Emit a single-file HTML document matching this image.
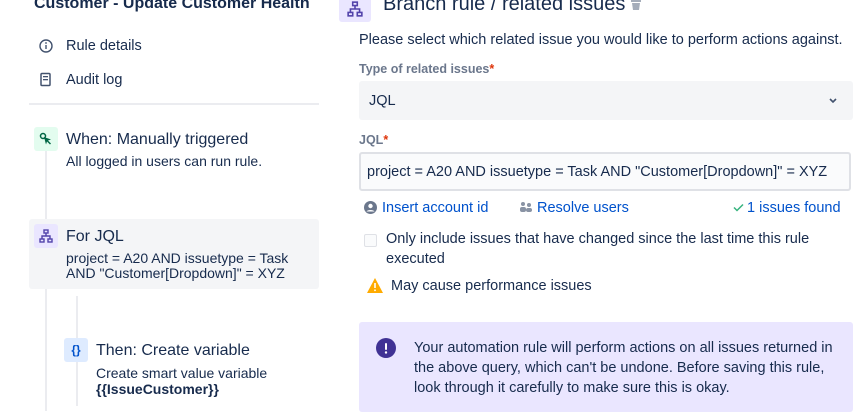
<!DOCTYPE html>
<html><head><style>
*{margin:0;padding:0;box-sizing:border-box}
body{width:861px;height:402px;overflow:hidden;background:#fff;font-family:"Liberation Sans",sans-serif;color:#172B4D;position:relative}
.a{position:absolute;white-space:nowrap}
.s13{font-size:14px}.s14{font-size:14.5px}.s16{font-size:16px}
.ib{position:absolute;width:24px;height:24px;border-radius:3px;display:flex;align-items:center;justify-content:center}
.blue{color:#0052CC}
</style></head><body>
<div class="a" style="left:34px;top:-5px;font-size:16px;font-weight:bold">Customer - Update Customer Health</div>
<svg class="a" style="left:38px;top:38px" width="16" height="16" viewBox="0 0 16 16"><circle cx="8" cy="8" r="6" fill="none" stroke="#42526E" stroke-width="1.4"/><rect x="7.3" y="7" width="1.4" height="4" fill="#42526E"/><circle cx="8" cy="5" r=".9" fill="#42526E"/></svg>
<div class="a s14" style="left:66px;top:38px">Rule details</div>
<svg class="a" style="left:39px;top:72px" width="14" height="16" viewBox="0 0 14 16"><rect x="2" y="1.5" width="9" height="12" rx="1" fill="none" stroke="#42526E" stroke-width="1.5"/><rect x="4" y="4" width="5" height="1.3" fill="#42526E"/><rect x="4" y="7" width="5" height="1.3" fill="#42526E"/></svg>
<div class="a s14" style="left:66px;top:72px">Audit log</div>
<div class="a" style="left:29px;top:103px;width:290px;height:2px;background:#ebecf0"></div>
<div class="a" style="left:45px;top:151px;width:2px;height:260px;background:#ebecf0"></div>
<div class="ib" style="left:34px;top:127px;background:#e3fcef"><svg width="16" height="16" viewBox="0 0 16 16"><circle cx="5" cy="5" r="2.5" fill="none" stroke="#006644" stroke-width="1.5"/><path d="M6 6l7 2.5-3 1 3 3-1 1-3-3-1 3z" fill="#006644"/></svg></div>
<div class="a s16" style="left:66px;top:131px">When: Manually triggered</div>
<div class="a s13" style="left:66px;top:153px">All logged in users can run rule.</div>
<div class="a" style="left:29px;top:219px;width:290px;height:70px;background:#f4f5f7;border-radius:3px"></div>
<div class="ib" style="left:34px;top:224px;background:#eae6ff"><svg width="14" height="14" viewBox="0 0 14 14" fill="none" stroke="#5243AA" stroke-width="1.4"><rect x="5" y="1" width="4" height="3"/><rect x="1" y="10" width="4" height="3"/><rect x="9" y="10" width="4" height="3"/><path d="M7 4v3M3 10V7h8v3"/></svg></div>
<div class="a s16" style="left:66px;top:228px">For JQL</div>
<div class="a s13" style="left:66px;top:250px">project = A20 AND issuetype = Task</div>
<div class="a s13" style="left:66px;top:265px">AND "Customer[Dropdown]" = XYZ</div>
<div class="a" style="left:76px;top:296px;width:2px;height:110px;background:#ebecf0"></div>
<div class="ib" style="left:64px;top:338px;background:#deebff;color:#0052CC;font-weight:bold;font-size:12px">{}</div>
<div class="a s16" style="left:96px;top:342px">Then: Create variable</div>
<div class="a s13" style="left:96px;top:365px">Create smart value variable</div>
<div class="a s13" style="left:96px;top:381px;font-weight:bold">{{IssueCustomer}}</div>

<div class="a" style="left:339px;top:-10px;width:32px;height:32px;border-radius:3px;background:#eae6ff;display:flex;align-items:center;justify-content:center;padding-top:6px"><svg width="16" height="16" viewBox="0 0 14 14" fill="none" stroke="#5243AA" stroke-width="1.4"><rect x="5" y="1" width="4" height="3"/><rect x="1" y="10" width="4" height="3"/><rect x="9" y="10" width="4" height="3"/><path d="M7 4v3M3 10V7h8v3"/></svg></div>
<div class="a" style="left:383px;top:-7px;font-size:20px">Branch rule / related issues</div>
<svg class="a" style="left:630px;top:0px" width="12" height="12" viewBox="0 0 12 12"><rect x="1" y="0" width="10" height="2" fill="#a5adba"/><path d="M2 3h8l-1 7H3z" fill="#a5adba"/></svg>
<div class="a s14" style="left:359px;top:32px">Please select which related issue you would like to perform actions against.</div>
<div class="a" style="left:359px;top:62px;font-size:12.5px;font-weight:bold;color:#6B778C">Type of related issues<span style="color:#DE350B">*</span></div>
<div class="a" style="left:359px;top:81px;width:494px;height:39px;background:#f4f5f7;border-radius:3px"></div>
<div class="a s14" style="left:369px;top:93px">JQL</div>
<svg class="a" style="left:828px;top:97px" width="10" height="8" viewBox="0 0 10 8"><path d="M2 2l3 3 3-3" fill="none" stroke="#42526E" stroke-width="1.6"/></svg>
<div class="a" style="left:359px;top:133px;font-size:12.5px;font-weight:bold;color:#6B778C">JQL<span style="color:#DE350B">*</span></div>
<div class="a" style="left:359px;top:152px;width:492px;height:39px;background:#fafbfc;border:2px solid #dfe1e6;border-radius:3px"></div>
<div class="a s14" style="left:367px;top:164px">project = A20 AND issuetype = Task AND "Customer[Dropdown]" = XYZ</div>
<svg class="a" style="left:364px;top:201px" width="13" height="13" viewBox="0 0 13 13"><circle cx="6.5" cy="6.5" r="6.5" fill="#6B778C"/><circle cx="6.5" cy="5" r="2.2" fill="#fff"/><path d="M2.5 10.5c1-2 7-2 8 0" fill="#fff"/></svg>
<div class="a s14 blue" style="left:382px;top:200px">Insert account id</div>
<svg class="a" style="left:519px;top:201px" width="14" height="12" viewBox="0 0 14 12"><circle cx="4" cy="3" r="2" fill="#8993a4"/><circle cx="10" cy="4" r="2" fill="#8993a4"/><rect x="1" y="6" width="6" height="5" rx="2" fill="#8993a4"/><rect x="7" y="7" width="6" height="4" rx="2" fill="#8993a4"/></svg>
<div class="a s14 blue" style="left:537px;top:200px">Resolve users</div>
<svg class="a" style="left:733px;top:203px" width="11" height="9" viewBox="0 0 11 9"><path d="M1 4.5l3 3 6-6" fill="none" stroke="#36B37E" stroke-width="1.5"/></svg>
<div class="a s14 blue" style="left:747px;top:200px">1 issues found</div>
<div class="a" style="left:364px;top:234px;width:13px;height:13px;border:1.5px solid #dfe1e6;border-radius:2px;background:#fafbfc"></div>
<div class="a s14" style="left:386px;top:231px">Only include issues that have changed since the last time this rule</div>
<div class="a s14" style="left:386px;top:251px">executed</div>
<svg class="a" style="left:366px;top:277px" width="18" height="17" viewBox="0 0 18 17"><path d="M9 1l8 15H1z" fill="#FFAB00"/><rect x="8.2" y="6" width="1.6" height="5" fill="#fff"/><rect x="8.2" y="12.5" width="1.6" height="1.6" fill="#fff"/></svg>
<div class="a s14" style="left:391px;top:278px">May cause performance issues</div>
<div class="a" style="left:359px;top:322px;width:494px;height:90px;background:#eae6ff;border-radius:3px"></div>
<svg class="a" style="left:376px;top:338px" width="20" height="20" viewBox="0 0 20 20"><circle cx="10" cy="10" r="10" fill="#403294"/><rect x="9" y="5" width="2" height="7" rx="1" fill="#fff"/><circle cx="10" cy="14.5" r="1.2" fill="#fff"/></svg>
<div class="a s14" style="left:414px;top:340px">Your automation rule will perform actions on all issues returned in</div>
<div class="a s14" style="left:414px;top:360px">the above query, which can't be undone. Before saving this rule,</div>
<div class="a s14" style="left:414px;top:380px">look through it carefully to make sure this is okay.</div>
</body></html>
